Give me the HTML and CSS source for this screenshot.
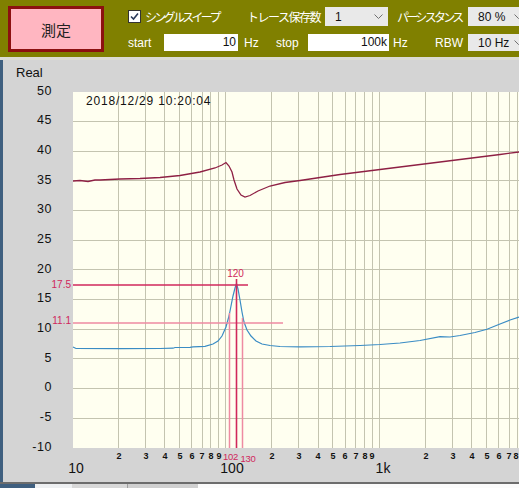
FILE: index.html
```html
<!DOCTYPE html>
<html lang="ja">
<head>
    <meta charset="UTF-8">
    <title>測定</title>
    <link rel="stylesheet" href="styles.css">
</head>
<body>
    <div class="toolbar">
        <button class="measure">測定</button>
        <div class="controls">
            <div class="row row-top">
                <label class="check w-sweep">
                    <span class="box">
                        <svg width="11" height="11" viewBox="0 0 11 11"><path d="M2 5.5 L4.5 8 L9 2.5" fill="none" stroke="#2a3a5a" stroke-width="1.6"/></svg>
                    </span>
                    <span class="kana ls-tight">シングルスイープ</span>
                </label>
                <span class="lbl kana ls-mid w-trace">トレース保存数</span>
                <div class="select w-keep">
                    <span>1</span>
                    <svg class="chev" width="9" height="6" viewBox="0 0 9 6"><path d="M0.5 0.5 L4.5 4.5 L8.5 0.5" fill="none" stroke="#707070"/></svg>
                </div>
                <span class="lbl kana ls-tight w-persist">パーシスタンス</span>
                <div class="select w-pers">
                    <span>80 %</span>
                    <svg class="chev" width="9" height="6" viewBox="0 0 9 6"><path d="M0.5 0.5 L4.5 4.5 L8.5 0.5" fill="none" stroke="#707070"/></svg>
                </div>
            </div>
            <div class="row row-bottom">
                <span class="lbl w-start">start</span>
                <div class="field w-fstart">10</div>
                <span class="lbl w-hz1">Hz</span>
                <span class="lbl w-stop">stop</span>
                <div class="field w-fstop">100k</div>
                <span class="lbl w-hz2">Hz</span>
                <span class="lbl w-rbw">RBW</span>
                <div class="select w-rbwsel">
                    <span>10 Hz</span>
                    <svg class="chev" width="9" height="6" viewBox="0 0 9 6"><path d="M0.5 0.5 L4.5 4.5 L8.5 0.5" fill="none" stroke="#707070"/></svg>
                </div>
            </div>
        </div>
    </div>

    <div class="panel">
        <div class="frame-edge"></div>
        <svg class="chart" width="516" height="422" viewBox="3 60 516 422">
            <text class="axis-title" x="16" y="77">Real</text>

            <g class="ylabels">
                <text x="52" y="94.5">50</text>
                <text x="52" y="124">45</text>
                <text x="52" y="153.5">40</text>
                <text x="52" y="183.5">35</text>
                <text x="52" y="213">30</text>
                <text x="52" y="242.5">25</text>
                <text x="52" y="272.5">20</text>
                <text x="52" y="302">15</text>
                <text x="52" y="331.5">10</text>
                <text x="52" y="361.5">5</text>
                <text x="52" y="391">0</text>
                <text x="52" y="420.5">-5</text>
                <text x="52" y="450.5">-10</text>
            </g>

            <rect class="plot" x="73" y="92" width="460" height="356"/>

            <!-- 5-unit rows, log decades 10 / 100 / 1k / 10k -->
            <path class="grid" d="M73 121.5H519 M73 151.5H519 M73 180.5H519 M73 210.5H519 M73 240.5H519 M73 269.5H519 M73 299.5H519 M73 329.5H519 M73 358.5H519 M73 388.5H519 M73 418.5H519
                M118.5 92V448 M145.5 92V448 M164.5 92V448 M179.5 92V448 M191.5 92V448 M202.5 92V448 M210.5 92V448 M218.5 92V448
                M225.5 92V448 M271.5 92V448 M298.5 92V448 M318.5 92V448 M332.5 92V448 M345.5 92V448 M355.5 92V448 M364.5 92V448 M372.5 92V448
                M379.5 92V448 M425.5 92V448 M452.5 92V448 M471.5 92V448 M486.5 92V448 M498.5 92V448 M509.5 92V448 M517.5 92V448"/>

            <text class="stamp" x="86" y="105">2018/12/29 10:20:04</text>

            <polyline class="trace-a" points="73,181 80,180.5 88,181.5 95,180 100,180 110,179.5 120,179 140,178.5 160,177.5 180,175.5 200,172 215,168 222,165 226,162.5 229,166 232,172 234,180 237,189 241,195 245,197 250,195.5 258,191 270,186 285,182.5 300,180.5 320,177.5 340,174.5 360,172 380,169.5 400,167 420,164.5 440,162 460,159.5 480,157 500,154.5 519,152"/>

            <polyline class="trace-b" points="73,347 76,348.5 120,348.7 160,348.5 173,348.2 175,347.5 190,347.3 193,346.8 205,346.3 213,344 218,341 222,336 226,327 229,316 231,306 233,296 235,288 236.5,283.5 238,289 240,300 242,312 244,322 247,330 251,336 256,341 262,344 270,345.5 280,346.5 300,346.8 330,346.5 360,345.5 380,344.5 400,343 420,340.5 440,336.7 450,337 460,335.5 475,332.5 487,329.3 500,324 510,320 519,317"/>

            <line class="mark-main" x1="73" y1="285" x2="248" y2="285"/>
            <line class="mark-sub" x1="73" y1="323" x2="283" y2="323"/>
            <line class="mark-sub" x1="229.5" y1="313" x2="229.5" y2="448"/>
            <line class="mark-main" x1="236.5" y1="279" x2="236.5" y2="448"/>
            <line class="mark-sub" x1="242.5" y1="318" x2="242.5" y2="448"/>

            <g class="mark-labels">
                <text x="71" y="288" text-anchor="end">17.5</text>
                <text x="71" y="324" text-anchor="end">11.1</text>
                <text x="235.5" y="277" text-anchor="middle">120</text>
                <text class="tick-mark" x="230.5" y="460" text-anchor="middle">102</text>
                <text class="tick-mark" x="248" y="462" text-anchor="middle">130</text>
            </g>

            <g class="ticks">
                <text x="119" y="459">2</text>
                <text x="146" y="459">3</text>
                <text x="165" y="459">4</text>
                <text x="180" y="459">5</text>
                <text x="192" y="459">6</text>
                <text x="202" y="459">7</text>
                <text x="211" y="459">8</text>
                <text x="219" y="459">9</text>
                <text x="272" y="459">2</text>
                <text x="299" y="459">3</text>
                <text x="318" y="459">4</text>
                <text x="333" y="459">5</text>
                <text x="345" y="459">6</text>
                <text x="356" y="459">7</text>
                <text x="365" y="459">8</text>
                <text x="372" y="459">9</text>
                <text x="426" y="459">2</text>
                <text x="453" y="459">3</text>
                <text x="472" y="459">4</text>
                <text x="487" y="459">5</text>
                <text x="499" y="459">6</text>
                <text x="509" y="459">7</text>
                <text x="516" y="459">8</text>
            </g>

            <g class="decades">
                <text x="76" y="473">10</text>
                <text x="232" y="473">100</text>
                <text x="383" y="473">1k</text>
            </g>
        </svg>
    </div>

    <div class="statusbar">
        <div class="seg seg-edge"></div>
        <div class="seg seg-light"></div>
        <div class="seg seg-gray"></div>
        <div class="seg seg-tab"></div>
        <div class="seg seg-white"></div>
    </div>
</body>
</html>
```

FILE: styles.css
```css
:root {
    --olive: #808000;
    --panel: #d4d4d4;
    --plot: #fffff0;
    --grid: #c4c4b0;
    --frame: #3f5f7f;
    --marker: #d0285c;
    --marker-light: #ee8aa2;
}

* {
    box-sizing: border-box;
}

body {
    margin: 0;
    width: 519px;
    height: 488px;
    overflow: hidden;
    background: var(--panel);
    font-family: "Liberation Sans", Arial, sans-serif;
    font-size: 12px;
}

/* toolbar */

.toolbar {
    display: flex;
    height: 60px;
    padding: 6px 0 0 8px;
    background: var(--olive);
    color: #ffffff;
    border-bottom: 3px solid #dcdcd4;
}

.measure {
    flex: none;
    width: 96px;
    height: 46px;
    margin: 0;
    padding: 0;
    background: #ffb6c1;
    border: 3px solid #8c1010;
    color: #222222;
    font-family: "Noto Sans CJK JP", sans-serif;
    font-size: 15px;
}

.controls {
    flex: none;
    display: flex;
    flex-direction: column;
    gap: 8px;
    margin-left: 24px;
    padding-top: 1px;
    white-space: nowrap;
}

.row {
    display: flex;
    align-items: center;
}

.row-top {
    height: 19px;
}

.row-bottom {
    height: 17px;
}

.lbl {
    flex: none;
}

.kana {
    font-family: "Noto Sans CJK JP", sans-serif;
    font-size: 12px;
}

.ls-tight { letter-spacing: -2.7px; }
.ls-mid { letter-spacing: -1.5px; }

.check {
    display: flex;
    align-items: center;
    gap: 4px;
    flex: none;
}

.box {
    display: flex;
    align-items: center;
    justify-content: center;
    width: 13px;
    height: 13px;
    background: #ffffff;
    border: 1px solid #333333;
}

.select {
    display: flex;
    align-items: center;
    justify-content: space-between;
    flex: none;
    height: 19px;
    padding: 0 5px 0 10px;
    background: #e9e9e9;
    color: #111111;
}

.row-bottom .select {
    height: 17px;
}

.field {
    flex: none;
    height: 17px;
    padding-right: 2px;
    background: #ffffff;
    color: #111111;
    text-align: right;
    line-height: 17px;
}

.w-sweep { width: 119px; }
.w-trace { width: 78px; }
.w-keep { width: 63px; }
.w-persist { width: 80px; padding-left: 9px; }
.w-pers { width: 60px; }
.w-start { width: 36px; }
.w-fstart { width: 74px; }
.w-hz1 { width: 38px; padding-left: 6px; }
.w-stop { width: 32px; }
.w-fstop { width: 81px; }
.w-hz2 { width: 46px; padding-left: 4px; }
.w-rbw { width: 33px; }
.w-rbwsel { width: 60px; }

/* chart panel */

.panel {
    display: flex;
    height: 422px;
}

.frame-edge {
    width: 3px;
    background: var(--frame);
}

.chart {
    display: block;
    font-family: "Liberation Sans", Arial, sans-serif;
}

.axis-title {
    font-size: 13px;
    fill: #111111;
}

.ylabels text {
    font-size: 12.5px;
    letter-spacing: 0.6px;
    text-anchor: end;
    fill: #111111;
}

.plot {
    fill: var(--plot);
}

.grid {
    fill: none;
    stroke: var(--grid);
    stroke-width: 1;
}

.stamp {
    font-size: 12px;
    letter-spacing: 0.8px;
    fill: #111111;
}

.trace-a {
    fill: none;
    stroke: #8e2044;
    stroke-width: 1.3;
}

.trace-b {
    fill: none;
    stroke: #3a8cc4;
    stroke-width: 1.2;
}

.mark-main {
    stroke: var(--marker);
    stroke-width: 1.6;
}

.mark-sub {
    stroke: var(--marker-light);
    stroke-width: 1.5;
}

.mark-labels text {
    font-size: 10px;
    fill: var(--marker);
}

.mark-labels .tick-mark {
    font-size: 9.5px;
    letter-spacing: -0.3px;
}

.ticks text {
    font-size: 9px;
    font-weight: bold;
    text-anchor: middle;
    fill: #111111;
}

.decades text {
    font-size: 14px;
    text-anchor: middle;
    fill: #111111;
}

/* bottom strip */

.statusbar {
    display: flex;
    height: 6px;
    border-top: 2px solid #6c6c6c;
}

.seg { height: 100%; }
.seg-edge { width: 35px; background: var(--frame); }
.seg-light { width: 37px; background: #eef0f2; }
.seg-gray { width: 55px; background: #d8d8d8; }
.seg-tab { width: 71px; background: #d0d0d0; border-left: 1px solid #a0a0a0; }
.seg-white { flex: 1; background: #fbfbfb; }
```
